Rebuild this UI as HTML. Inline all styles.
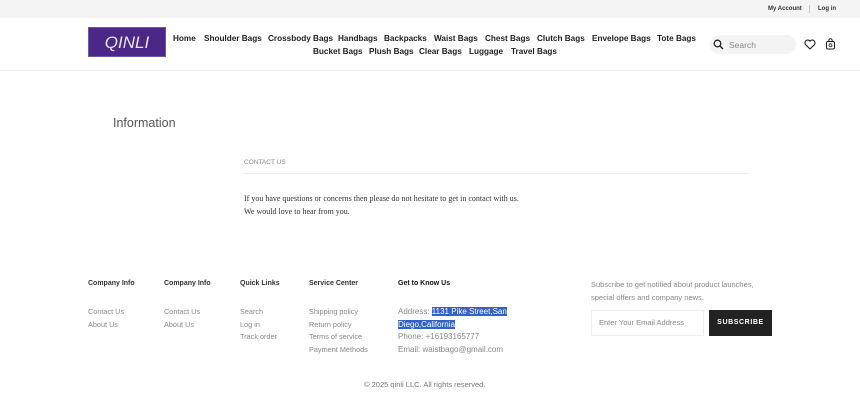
<!DOCTYPE html>
<html><head><meta charset="utf-8"><style>
*{margin:0;padding:0;box-sizing:border-box}
body{width:860px;height:416px;background:#fff;font-family:"Liberation Sans",Arial,sans-serif;position:relative;overflow:hidden;color:#222}
.a{position:absolute;white-space:nowrap}
.top{position:absolute;left:0;top:0;width:860px;height:18px;background:#f4f4f4}
.hdr{position:absolute;left:0;top:18px;width:860px;height:53px;border-bottom:1px solid #ececec}
.n{position:absolute;white-space:nowrap;font-size:8.2px;font-weight:bold;color:#222}
.r1{top:34px}.r2{top:47px}
.fh{font-size:7px;font-weight:bold;color:#333}
.fl{font-size:7.3px;color:#888;line-height:12.5px}
</style></head><body>
<div class="top"></div>
<div class="a" style="left:768px;top:6px;font-size:6px;font-weight:bold;color:#333">My Account</div>
<div class="a" style="left:809px;top:5px;width:1px;height:8px;background:#ccc"></div>
<div class="a" style="left:818px;top:6px;font-size:6px;font-weight:bold;color:#333">Log in</div>
<div class="hdr"></div>
<div class="a" style="left:88px;top:27px;width:78px;height:30px;background:#4b2887;color:#e8e4f4;font-size:17px;font-style:italic;text-align:center;line-height:30px;border:1px solid #6a5aa8">QINLI</div>
<div class="n r1" style="left:173px">Home</div>
<div class="n r1" style="left:204px">Shoulder Bags</div>
<div class="n r1" style="left:268px">Crossbody Bags</div>
<div class="n r1" style="left:338px">Handbags</div>
<div class="n r1" style="left:384px">Backpacks</div>
<div class="n r1" style="left:434px">Waist Bags</div>
<div class="n r1" style="left:485px">Chest Bags</div>
<div class="n r1" style="left:537px">Clutch Bags</div>
<div class="n r1" style="left:592px">Envelope Bags</div>
<div class="n r1" style="left:657px">Tote Bags</div>
<div class="n r2" style="left:313px">Bucket Bags</div>
<div class="n r2" style="left:369px">Plush Bags</div>
<div class="n r2" style="left:419px">Clear Bags</div>
<div class="n r2" style="left:469px">Luggage</div>
<div class="n r2" style="left:511px">Travel Bags</div>
<div class="a" style="left:710px;top:35px;width:86px;height:19px;border-radius:10px;background:#f3f3f3"></div>
<svg class="a" style="left:713px;top:39px" width="11" height="11" viewBox="0 0 11 11"><circle cx="4.5" cy="4.5" r="3.3" fill="none" stroke="#222" stroke-width="1.3"/><path d="M7 7l3 3" stroke="#222" stroke-width="1.4"/></svg>
<div class="a" style="left:729px;top:40px;font-size:8.5px;color:#888">Search</div>
<svg class="a" style="left:804px;top:39px" width="12" height="11" viewBox="0 0 12 11"><path d="M6 10L1.5 5.5A2.6 2.6 0 0 1 6 2.2A2.6 2.6 0 0 1 10.5 5.5Z" fill="none" stroke="#222" stroke-width="1.1"/></svg>
<svg class="a" style="left:825px;top:38px" width="11" height="12" viewBox="0 0 11 12"><rect x="1.5" y="3.5" width="8" height="7.5" rx="1.5" fill="none" stroke="#222" stroke-width="1"/><path d="M3.8 3.5V2.5a1.7 1.7 0 0 1 3.4 0v1" fill="none" stroke="#222" stroke-width="1"/><circle cx="5.5" cy="7.3" r="1.5" fill="none" stroke="#222" stroke-width=".8"/></svg>
<div class="a" style="left:113px;top:116px;font-size:12.5px;color:#555">Information</div>
<div class="a" style="left:244px;top:159px;font-size:6.5px;color:#888">CONTACT US</div>
<div class="a" style="left:244px;top:173px;width:504px;height:1px;background:#eee"></div>
<div class="a" style="left:244px;top:192px;font-family:'Liberation Serif',serif;font-size:8px;color:#333;line-height:13px">If you have questions or concerns then please do not hesitate to get in contact with us.<br>We would love to hear from you.</div>
<div class="a fh" style="left:88px;top:280px">Company Info</div>
<div class="a fh" style="left:164px;top:280px">Company Info</div>
<div class="a fh" style="left:240px;top:280px">Quick Links</div>
<div class="a fh" style="left:309px;top:280px">Service Center</div>
<div class="a fh" style="left:398px;top:280px;color:#111">Get to Know Us</div>
<div class="a fl" style="left:88px;top:306px">Contact Us<br>About Us</div>
<div class="a fl" style="left:164px;top:306px">Contact Us<br>About Us</div>
<div class="a fl" style="left:240px;top:306px">Search<br>Log in<br>Track order</div>
<div class="a fl" style="left:309px;top:306px">Shipping policy<br>Return policy<br>Terms of service<br>Payment Methods</div>
<div class="a fl" style="left:398px;top:306px;font-size:8px">Address: <span style="background:#2f63c9;color:#fff">1131 Pike Street,San</span><br><span style="background:#2f63c9;color:#fff">Diego,California</span><br>Phone: +16193165777<br>Email: waistbago@gmail.com</div>
<div class="a" style="left:591px;top:279px;font-size:7.5px;color:#888;line-height:12.5px">Subscribe to get notified about product launches,<br>special offers and company news.</div>
<div class="a" style="left:591px;top:310px;width:113px;height:26px;border:1px solid #eee;font-size:7.5px;color:#888;line-height:24px;padding-left:7px">Enter Your Email Address</div>
<div class="a" style="left:709px;top:310px;width:63px;height:26px;background:#222;color:#fff;font-size:7px;font-weight:bold;letter-spacing:.6px;text-align:center;line-height:26px">SUBSCRIBE</div>
<div class="a" style="left:364px;top:380px;font-size:7.5px;color:#777">© 2025 qinli LLC. All rights reserved.</div>
</body></html>
